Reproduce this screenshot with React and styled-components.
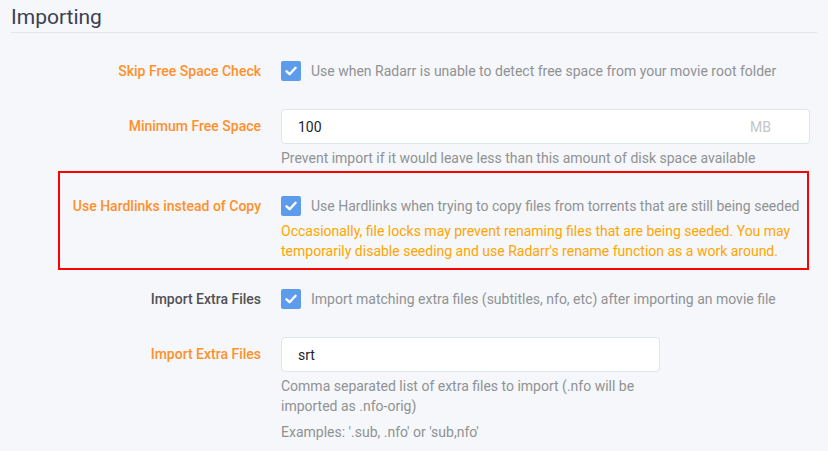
import styled, { createGlobalStyle } from "styled-components";

const GlobalStyle = createGlobalStyle`
  html, body {
    margin: 0;
    padding: 0;
    background: #f5f7fa;
  }
  body {
    font-family: Roboto, "Liberation Sans", sans-serif;
    font-size: 14px;
    color: #515253;
  }
`;

const Page = styled.div`
  padding-left: 11px;
  width: 817px;
  min-height: 451px;
  box-sizing: border-box;
`;

const Legend = styled.h2`
  margin: 0;
  padding-top: 2px;
  font-size: 21px;
  font-weight: 400;
  line-height: 30px;
  color: #3a3f51;
  border-bottom: 1px solid #e5e5e5;
  margin-bottom: 23px;
`;

const Group = styled.div`
  display: flex;
  align-items: flex-start;
  margin-bottom: 23px;
`;

const Highlight = styled(Group)`
  position: relative;

  &::after {
    content: "";
    position: absolute;
    top: -20px;
    bottom: -9px;
    left: 47px;
    right: 8px;
    border: 2px solid #ff0000;
    pointer-events: none;
  }
`;

const Label = styled.label`
  flex: none;
  width: 250px;
  padding-right: 20px;
  text-align: right;
  font-weight: 500;
  line-height: ${(p) => p.$h}px;
  color: ${(p) => (p.$advanced ? "#ff902b" : "#515253")};
`;

const Control = styled.div`
  flex: none;
  width: ${(p) => p.$w}px;
`;

const CheckRow = styled.div`
  display: flex;
  align-items: center;
  height: 30px;
  gap: 10px;
  color: #909293;
`;

const Box = styled.span`
  flex: none;
  width: 20px;
  height: 20px;
  border-radius: 2px;
  background: #5d9cec;
  display: flex;
  align-items: center;
  justify-content: center;
`;

const InputWrap = styled.div`
  display: flex;
  align-items: center;
  height: 35px;
  box-sizing: border-box;
  background: #fff;
  border: 1px solid #dde6e9;
  border-radius: 4px;
  padding: 0 38px 0 16px;
`;

const Value = styled.span`
  flex: 1;
  color: #1c1e2e;
`;

const Unit = styled.span`
  color: #c3c5c7;
`;

const Help = styled.div`
  margin-top: ${(p) => p.$mt || 0}px;
  line-height: 20px;
  color: ${(p) => (p.$warn ? "#ffa500" : "#909293")};
`;

function Checkbox({ children }) {
  return (
    <CheckRow>
      <Box>
        <svg width="14" height="14" viewBox="0 0 14 14">
          <polyline
            points="2.5,7.3 5.6,10.2 11.6,3.8"
            fill="none"
            stroke="#fff"
            strokeWidth="2.4"
            strokeLinecap="round"
            strokeLinejoin="round"
          />
        </svg>
      </Box>
      <span>{children}</span>
    </CheckRow>
  );
}

export default function App() {
  return (
    <>
      <GlobalStyle />
      <Page>
        <Legend>Importing</Legend>

        <Group>
          <Label $advanced $h={30}>Skip Free Space Check</Label>
          <Control $w={529}>
            <Checkbox>
              Use when Radarr is unable to detect free space from your movie root folder
            </Checkbox>
          </Control>
        </Group>

        <Group>
          <Label $advanced $h={35}>Minimum Free Space</Label>
          <Control $w={529}>
            <InputWrap>
              <Value>100</Value>
              <Unit>MB</Unit>
            </InputWrap>
            <Help $mt={4}>
              Prevent import if it would leave less than this amount of disk space available
            </Help>
          </Control>
        </Group>

        <Highlight>
          <Label $advanced $h={30}>Use Hardlinks instead of Copy</Label>
          <Control $w={529}>
            <Checkbox>
              Use Hardlinks when trying to copy files from torrents that are still being seeded
            </Checkbox>
            <Help $warn>
              Occasionally, file locks may prevent renaming files that are being seeded. You may
              temporarily disable seeding and use Radarr's rename function as a work around.
            </Help>
          </Control>
        </Highlight>

        <Group>
          <Label $h={30}>Import Extra Files</Label>
          <Control $w={529}>
            <Checkbox>
              Import matching extra files (subtitles, nfo, etc) after importing an movie file
            </Checkbox>
          </Control>
        </Group>

        <Group>
          <Label $advanced $h={35}>Import Extra Files</Label>
          <Control $w={379}>
            <InputWrap>
              <Value>srt</Value>
            </InputWrap>
            <Help $mt={4}>
              Comma separated list of extra files to import (.nfo will be imported as .nfo-orig)
            </Help>
            <Help $mt={6}>Examples: '.sub, .nfo' or 'sub,nfo'</Help>
          </Control>
        </Group>
      </Page>
    </>
  );
}
